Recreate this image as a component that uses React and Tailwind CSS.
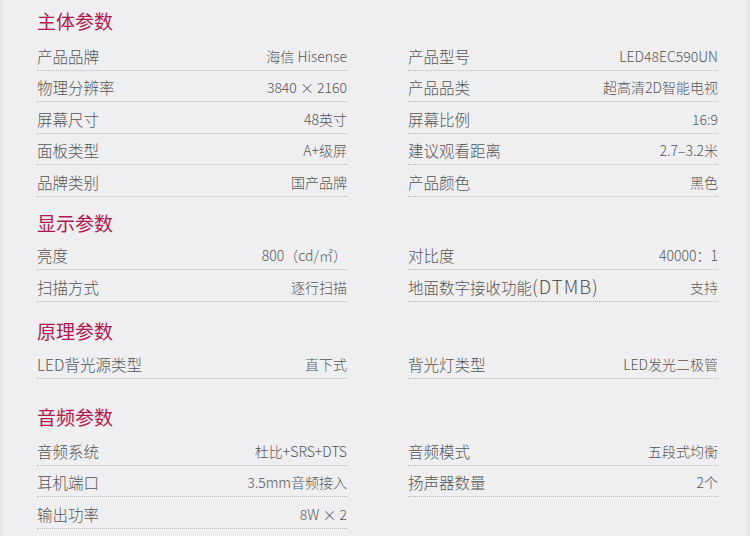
const sections = [
  {
    title: "主体参数",
    wrap: "pt-[7px]",
    gap: "mb-[4px]",
    rows: [
      ["产品品牌", "海信 Hisense", "产品型号", "LED48EC590UN"],
      ["物理分辨率", "3840 × 2160", "产品品类", "超高清2D智能电视"],
      ["屏幕尺寸", "48英寸", "屏幕比例", "16:9"],
      ["面板类型", "A+级屏", "建议观看距离", "2.7–3.2米"],
      ["品牌类别", "国产品牌", "产品颜色", "黑色"],
    ],
  },
  {
    title: "显示参数",
    wrap: "mt-[12px]",
    gap: "mb-[2px]",
    rows: [
      ["亮度", "800（cd/㎡）", "对比度", "40000：1"],
      [
        "扫描方式",
        "逐行扫描",
        <>
          地面数字接收功能
          <span className="text-[18.5px] leading-none tracking-[1px] font-light">(DTMB)</span>
        </>,
        "支持",
      ],
    ],
  },
  {
    title: "原理参数",
    wrap: "mt-[15px]",
    gap: "mb-[3px]",
    rows: [["LED背光源类型", "直下式", "背光灯类型", "LED发光二极管"]],
  },
  {
    title: "音频参数",
    wrap: "mt-[24px]",
    gap: "mb-[3px]",
    rows: [
      ["音频系统", "杜比+SRS+DTS", "音频模式", "五段式均衡"],
      ["耳机端口", "3.5mm音频接入", "扬声器数量", "2个"],
      ["输出功率", "8W × 2", null, null],
    ],
  },
];

function Row({ label, value }) {
  if (!label) return <div />;
  return (
    <div className="h-[31.5px] pt-[4px] flex items-center justify-between border-b border-dotted border-[#b4b4b6]">
      <span className="text-[15.5px] font-light text-[#555]">{label}</span>
      <span className="text-[14px] font-light text-[#555]">{value}</span>
    </div>
  );
}

export default function App() {
  return (
    <div
      className="w-[750px] h-[536px] overflow-hidden bg-[#efeff1] border-x-[3px] border-[#e6e6e8]"
      style={{ fontFamily: '"Noto Sans CJK SC", "Noto Sans", sans-serif' }}
    >
      <div className="pl-[34px] w-[715px]">
        {sections.map((s) => (
          <section key={s.title} className={s.wrap}>
            <h2 className={`h-[28px] leading-[28px] text-[19px] text-[#b0184f] ${s.gap}`}>{s.title}</h2>
            <div className="grid grid-cols-2 gap-x-[61px]">
              {s.rows.map((r, i) => [
                <Row key={i + "a"} label={r[0]} value={r[1]} />,
                <Row key={i + "b"} label={r[2]} value={r[3]} />,
              ])}
            </div>
          </section>
        ))}
      </div>
    </div>
  );
}
